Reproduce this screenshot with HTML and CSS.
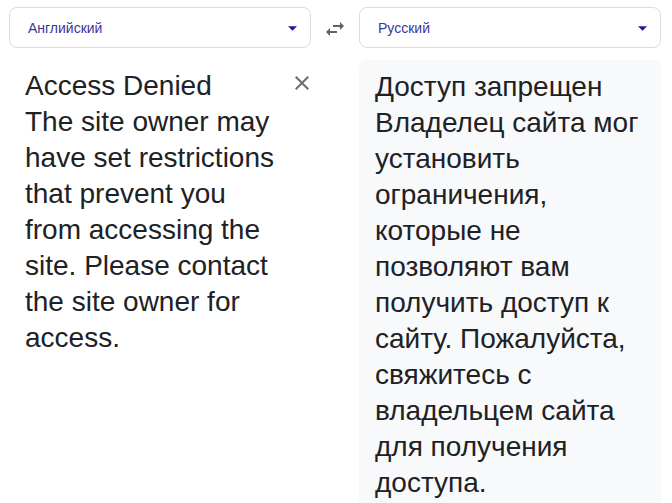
FILE: index.html
```html
<!DOCTYPE html>
<html lang="ru">
<head>
<meta charset="utf-8">
<title>Перевод</title>
<link rel="stylesheet" href="styles.css">
</head>
<body>
<div class="app">
  <div class="select">
    <span class="select-label">Английский</span>
    <svg class="caret" viewBox="0 0 10 5" width="10" height="5"><path d="M0 0l5 5 5-5z"/></svg>
  </div>
  <button class="swap" aria-label="swap">
    <svg viewBox="0 0 24 24" width="24" height="24"><path d="M6.99 11L3 15l3.99 4v-3H14v-2H6.99v-3zM21 9l-3.99-4v3H10v2h7.01v3L21 9z"/></svg>
  </button>
  <div class="select">
    <span class="select-label">Русский</span>
    <svg class="caret" viewBox="0 0 10 5" width="10" height="5"><path d="M0 0l5 5 5-5z"/></svg>
  </div>

  <div class="source">
    <div class="source-text">Access Denied<br>The site owner may have set restrictions that prevent you from accessing the site. Please contact the site owner for access.</div>
    <button class="clear" aria-label="clear">
      <svg viewBox="0 0 24 24" width="24" height="24"><path d="M19 6.41L17.59 5 12 10.59 6.41 5 5 6.41 10.59 12 5 17.59 6.41 19 12 13.41 17.59 19 19 17.59 13.41 12z"/></svg>
    </button>
  </div>
  <div class="spacer"></div>
  <div class="target">
    <div class="target-text">Доступ запрещен<br>Владелец сайта мог установить ограничения, которые не позволяют вам получить доступ к сайту. Пожалуйста, свяжитесь с владельцем сайта для получения доступа.</div>
  </div>
</div>
</body>
</html>
```

FILE: styles.css
```css
html, body {
  margin: 0;
  padding: 0;
  height: 100%;
  overflow: hidden;
  background: #ffffff;
}

body {
  font-family: "Liberation Sans", Arial, sans-serif;
  color: #202124;
}

.app {
  display: grid;
  grid-template-columns: 302px 48px 302px;
  grid-template-rows: 41px auto;
  row-gap: 12px;
  padding: 7px 11px 0 9px;
}

.select {
  box-sizing: border-box;
  display: flex;
  align-items: center;
  justify-content: space-between;
  border: 1px solid #dadce0;
  border-radius: 8px;
  padding: 0 13px 0 18px;
  background: #fff;
}

.select-label {
  font-size: 14px;
  color: #3d3597;
  line-height: 20px;
}

.caret {
  fill: #1f1a8f;
  width: 9px;
  height: 5px;
  margin-top: 2px;
}

.swap {
  display: flex;
  align-items: center;
  justify-content: center;
  border: 0;
  background: none;
  padding: 0;
  fill: #5f6368;
  margin-top: 2px;
}

.source {
  display: flex;
  align-items: flex-start;
  gap: 9px;
  padding: 8px 0 0 16px;
}

.source-text {
  flex: 1;
  font-size: 28px;
  line-height: 36px;
}

.clear {
  flex: 0 0 24px;
  width: 24px;
  height: 24px;
  border: 0;
  background: none;
  padding: 0;
  margin: 3px -3px 0 0;
  fill: #6b6e72;
}

.clear svg {
  display: block;
}

.target {
  background: #f8f9fb;
  border-radius: 8px 8px 0 0;
  padding: 9px 16px 2px 16px;
}

.target-text {
  font-size: 28px;
  line-height: 36px;
}
```
